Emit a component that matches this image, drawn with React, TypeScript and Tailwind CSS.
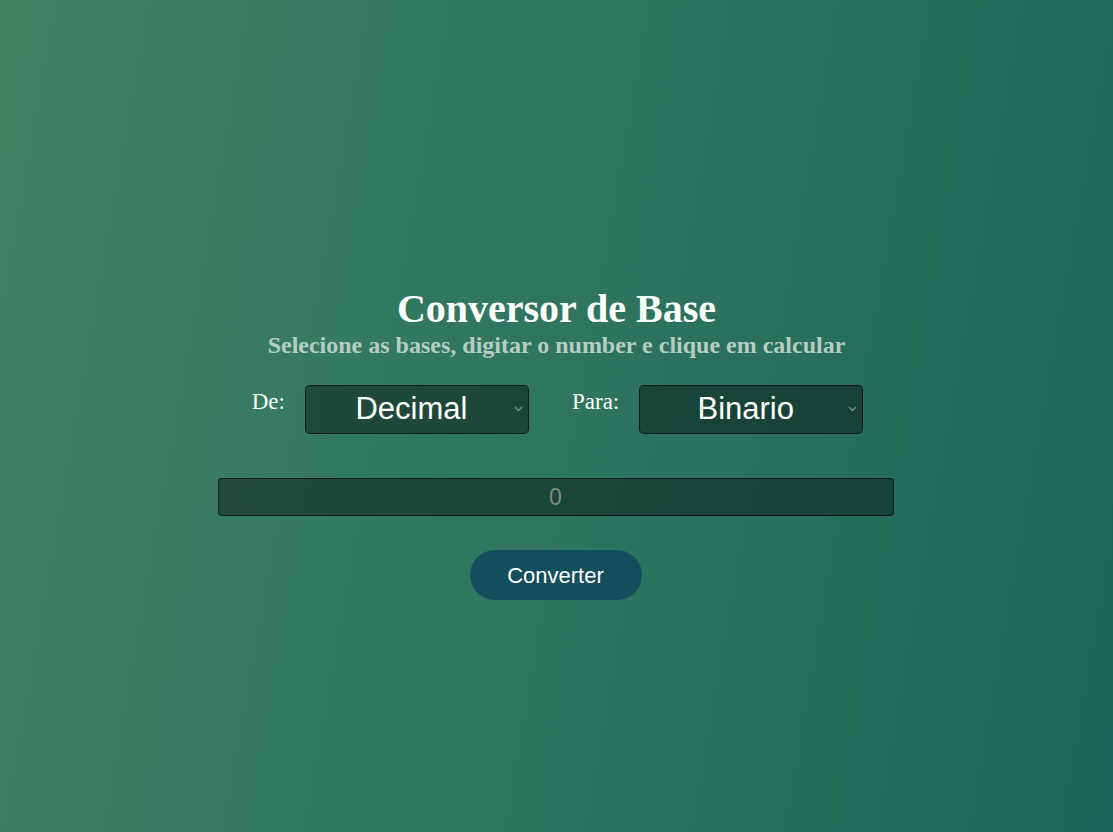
import { useState } from 'react';

const BASES = ['Binario', 'Octal', 'Decimal', 'Hexadecimal'];

function BaseSelect({ value, onChange }: { value: string; onChange: (v: string) => void }) {
  return (
    <div className="relative w-[224px] h-[49px]">
      <select
        value={value}
        onChange={(e) => onChange(e.target.value)}
        className="appearance-none w-full h-full rounded-[5px] border border-black/60 bg-black/40 pr-[11px] text-white text-center text-[31px] font-['Liberation_Sans',Arial,sans-serif] outline-none"
      >
        {BASES.map((b) => (
          <option key={b} value={b} className="bg-[#1f4d40] text-white text-base">
            {b}
          </option>
        ))}
      </select>
      <svg
        className="pointer-events-none absolute right-[6px] top-[21px]"
        width="9"
        height="6"
        viewBox="0 0 9 6"
        fill="none"
      >
        <path d="M1 1l3.5 3.5L8 1" stroke="#7f8c87" strokeWidth="1.4" />
      </svg>
    </div>
  );
}

export default function App() {
  const [from, setFrom] = useState('Decimal');
  const [to, setTo] = useState('Binario');
  const [num, setNum] = useState('');

  return (
    <div className="min-h-screen w-full bg-[linear-gradient(100deg,#3f8365_0%,#1e6659_100%)] flex flex-col items-center pt-[285px] font-['Liberation_Serif','Times_New_Roman',serif]">
      <h1 className="text-white font-bold text-[40px] leading-[48px]">Conversor de Base</h1>
      <p className="text-[#b5cdc2] font-bold text-[24px] leading-[28px] -mt-[2px]">
        Selecione as bases, digitar o number e clique em calcular
      </p>

      <div className="mt-[26px] ml-[2px] flex items-start">
        <label className="text-white text-[23px] leading-[26px] pt-[4px] mr-[20px]">De:</label>
        <BaseSelect value={from} onChange={setFrom} />
        <label className="text-white text-[23px] leading-[26px] pt-[4px] ml-[43px] mr-[20px]">Para:</label>
        <BaseSelect value={to} onChange={setTo} />
      </div>

      <input
        value={num}
        onChange={(e) => setNum(e.target.value)}
        placeholder="0"
        className="mt-[44px] -ml-[2px] w-[676px] h-[38px] rounded-[4px] border border-black/60 bg-black/40 text-center text-white text-[23px] font-['Liberation_Sans',Arial,sans-serif] placeholder:text-[#7d8a85] outline-none"
      />

      <button className="mt-[34px] -ml-[2px] w-[172px] h-[50px] rounded-full bg-[#124e5c] text-white text-[22px] font-['Liberation_Sans',Arial,sans-serif]">
        Converter
      </button>
    </div>
  );
}
